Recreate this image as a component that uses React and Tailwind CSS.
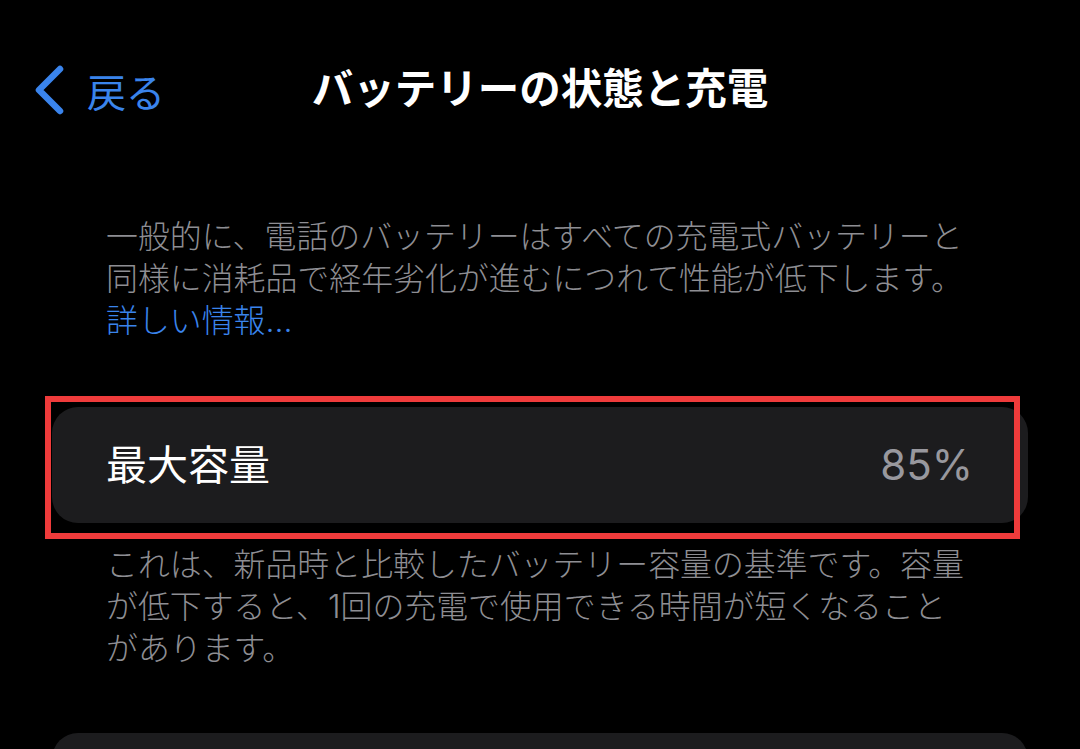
import React from 'react';

const ChevronLeft = () => (
  <svg width="32" height="50" viewBox="0 0 32 50" fill="none">
    <path d="M27 4 L6 25 L27 46" stroke="#3a84ec" strokeWidth="6.5" strokeLinecap="round" strokeLinejoin="round" />
  </svg>
);

const App = () => {
  return (
    <div className="relative w-[1080px] h-[749px] overflow-hidden bg-black font-['Inter','Noto_Sans_CJK_JP',sans-serif]">
      {/* nav bar */}
      <header className="grid h-[180px] grid-cols-[1fr_auto_1fr] items-center">
        <button className="flex items-center gap-[22px] pl-[33px] text-[39px] leading-none text-[#3a84ec]">
          <ChevronLeft />
          <span className="font-['Noto_Sans_CJK_JP',sans-serif]">戻る</span>
        </button>
        <h1 className="text-[41.5px] font-semibold leading-none text-white">バッテリーの状態と充電</h1>
        <div />
      </header>

      <p className="mt-[36px] whitespace-nowrap pl-[106px] text-[31.9px] font-light leading-[42px] text-[#8e8e93]">
        一般的に、電話のバッテリーはすべての充電式バッテリーと
        <br />
        同様に消耗品で経年劣化が進むにつれて性能が低下します。
        <br />
        <span className="text-[#3a84ec]">詳しい情報...</span>
      </p>

      {/* capacity card */}
      <div className="ml-[52px] mt-[65px] flex h-[116px] w-[976px] items-center justify-between rounded-[26px] bg-[#1c1c1e] pl-[54px] pr-[55px]">
        <span className="text-[41px] leading-none text-white">最大容量</span>
        <span className="text-[42px] leading-none text-[#98989e]">85%</span>
      </div>

      <p className="mt-[21px] whitespace-nowrap pl-[106px] text-[31.9px] font-light leading-[42px] text-[#8e8e93]">
        これは、新品時と比較したバッテリー容量の基準です。容量
        <br />
        が低下すると、1回の充電で使用できる時間が短くなること
        <br />
        があります。
      </p>

      <div className="ml-[52px] mt-[63px] h-[80px] w-[976px] rounded-[26px] bg-[#1c1c1e]" />

      {/* highlight frame */}
      <div className="pointer-events-none absolute left-[45px] top-[396px] h-[143px] w-[975px] border-[6px] border-[#ef3b3b]" />
    </div>
  );
};

export default App;
